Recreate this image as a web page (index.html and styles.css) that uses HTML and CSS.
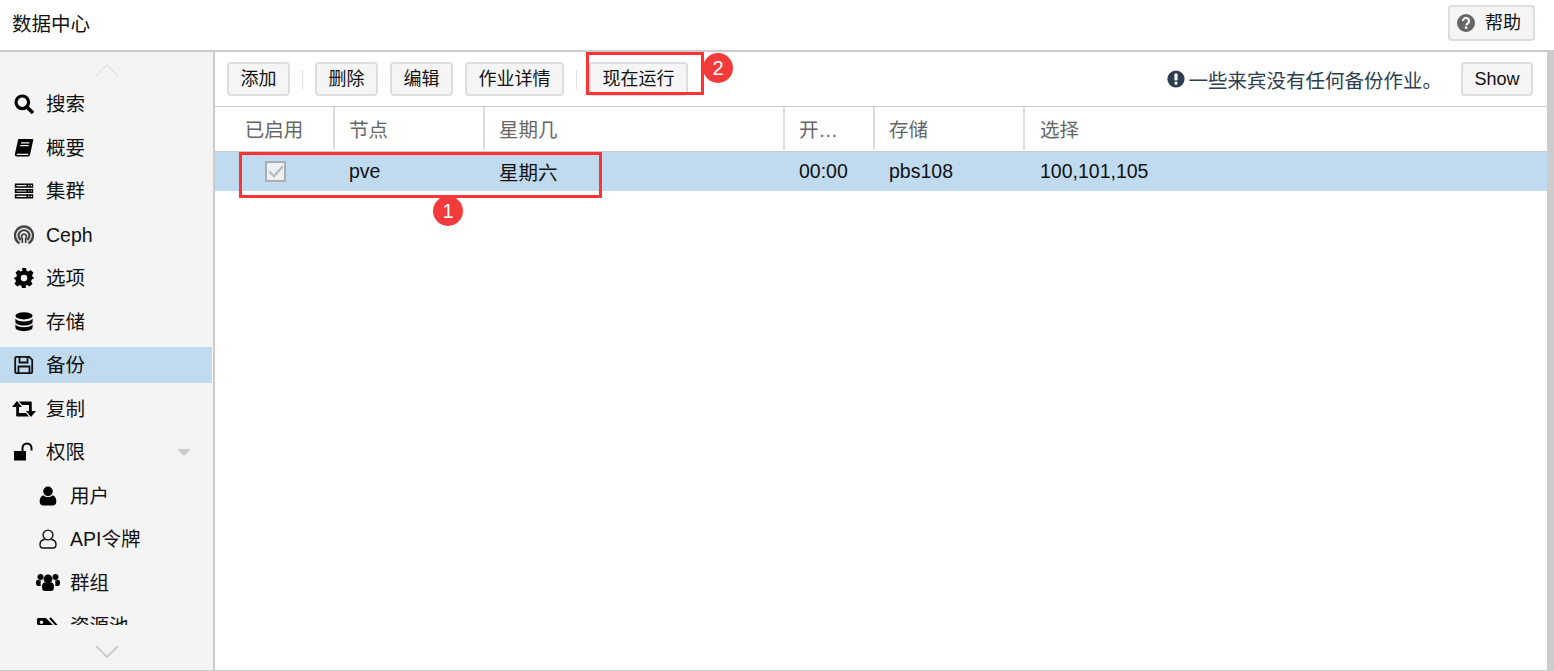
FILE: index.html
```html
<!DOCTYPE html>
<html lang="zh">
<head>
<meta charset="utf-8">
<title>数据中心</title>
<link rel="stylesheet" href="styles.css">
</head>
<body>
<div class="app">
  <header class="topbar">
    <span class="title">数据中心</span>
    <button class="btn help"><svg class="help-ico" viewBox="0 0 18 18"><circle cx="9" cy="9" r="9" fill="#666"/><path d="M6 7a3 3 0 1 1 4.600 2.500c-.9.600-1.100.9-1.100 1.700" fill="none" stroke="#fff" stroke-width="2.200"/><rect x="7.900" y="12.400" width="2.400" height="2.400" fill="#fff"/></svg>帮助</button>
  </header>
  <div class="main">
    <nav class="side">
      <div class="scroller"><svg class="chev" viewBox="0 0 24 13"><path d="M1 12 12 1l11 11" fill="none" stroke="#e6e6e6" stroke-width="2"/></svg></div>
      <ul class="menu">
        <li class="item"><span class="ico"><svg viewBox="0 0 20 20"><circle cx="8.300" cy="8.300" r="6.300" fill="none" stroke="#000" stroke-width="3.200"/><path d="m13 13 6 6" stroke="#000" stroke-width="3.600"/></svg></span>搜索</li>
        <li class="item"><span class="ico"><svg viewBox="0 0 20 20"><path d="M5 1h13.500c.6 0 .9.500.7 1.200L16 16.800c-.2.900-1 1.700-1.900 1.700H3c-1.700 0-2.500-1.200-2-3L4 2c.2-.6.500-1 1-1z"/><path d="M2.800 15.700c-.3 1 .2 1.200.8 1.200h10.600l.3-1.200zM7.200 4.200h8.300l-.3 1.300H6.900zM6.500 7h8.300l-.3 1.300H6.200z" fill="#f4f4f4"/></svg></span>概要</li>
        <li class="item"><span class="ico"><svg viewBox="-1 0 24 18"><path d="M0 0h22v5H0zM0 6.500h22v5H0zM0 13h22v5H0z"/><path d="M2 1.800h12v1.400H2zM2 8.300h12v1.400H2zM2 14.800h12v1.400H2zM16 1.800h1.500v1.400H16zM19 1.800h1.500v1.400H19zM16 8.300h1.500v1.400H16zM19 8.300h1.500v1.400H19zM16 14.800h1.500v1.400H16zM19 14.800h1.500v1.400H19z" fill="#f4f4f4"/></svg></span>集群</li>
        <li class="item"><span class="ico"><svg viewBox="0 0 20 20" fill="none" stroke="#444"><path d="M5.500 18.300a9 9 0 1 1 9 0" stroke-width="2.400"/><path d="M6.800 15a5.400 5.400 0 1 1 6.400 0" stroke-width="2.200"/><path d="M8.300 18v-4.500a2.500 2.500 0 1 1 3.400 0V18" stroke-width="1.800"/></svg></span>Ceph</li>
        <li class="item"><span class="ico"><svg viewBox="0 0 20 20"><path fill-rule="evenodd" d="M8 0h4l.6 2.800 1.700.7 2.400-1.500 2.800 2.800-1.500 2.400.7 1.700L20.500 10v0l-2.800 1.600-.7 1.700 1.500 2.400-2.800 2.800-2.400-1.500-1.700.7L12 20H8l-.6-2.300-1.700-.7-2.400 1.500-2.800-2.800 1.500-2.400-.7-1.700L-.5 10v0l2.800-1.100.7-1.700-1.500-2.400 2.800-2.800 2.400 1.500 1.700-.7zM10 6.800a3.300 3.300 0 1 0 0 6.600 3.300 3.300 0 0 0 0-6.600z"/></svg></span>选项</li>
        <li class="item"><span class="ico"><svg viewBox="0 0 20 21"><ellipse cx="10" cy="4" rx="9" ry="3.800"/><path d="M1 6.500c1 2 4.500 3 9 3s8-1 9-3V10c0 2.200-4 3.800-9 3.800S1 12.200 1 10zM1 12.500c1 2 4.500 3 9 3s8-1 9-3V16c0 2.200-4 3.800-9 3.800S1 18.200 1 16z" transform="translate(0 .4)"/></svg></span>存储</li>
        <li class="item active"><span class="ico"><svg viewBox="0 0 20 20" fill="none" stroke="#111" stroke-width="1.800"><path d="M2.400 1.900h12.800l3 3v12a1.200 1.200 0 0 1-1.200 1.200H2.400a1.200 1.200 0 0 1-1.200-1.200V3.100a1.200 1.200 0 0 1 1.200-1.200z"/><path d="M5.500 2v5.500h8V2M4.500 18v-6.500h11V18"/></svg></span>备份</li>
        <li class="item"><span class="ico wide"><svg viewBox="0 0 24 18"><path d="M5 1 10 7H7v6h7l3 3.500H5.500c-.8 0-1.300-.5-1.300-1.300V7H0zM19 17l-5-6h3V5h-7L7 1.500h11.500c.8 0 1.300.5 1.300 1.300V11H24z"/></svg></span>复制</li>
        <li class="item"><span class="ico"><svg viewBox="0 0 20 18"><path d="M0 8h12v9.500H0z"/><path d="M8.500 8V5a4.500 4.500 0 0 1 9 0v2.500" fill="none" stroke="#000" stroke-width="2"/></svg></span>权限<i class="caret"></i></li>
        <li class="item sub"><span class="ico"><svg viewBox="0 0 16 18"><circle cx="8" cy="4.800" r="4.300"/><path d="M.5 14c0-4 2-5.500 3.500-5.500 1.200 1 2.500 1.400 4 1.400s2.800-.4 4-1.400c1.500 0 3.500 1.500 3.500 5.500 0 2.500-1.500 3.500-3 3.500H3.500C2 17.500.5 16.500.5 14z"/></svg></span>用户</li>
        <li class="item sub"><span class="ico"><svg viewBox="0 0 18 20" fill="none" stroke="#111" stroke-width="1.400"><circle cx="9" cy="6" r="4.900"/><path d="M5.600 10.500C3 10.700 1 12.700 1 15.500c0 2 1 3.500 3 3.500h10c2 0 3-1.500 3-3.500 0-2.800-2-4.800-4.600-5"/></svg></span>API令牌</li>
        <li class="item sub"><span class="ico wide"><svg viewBox="0 0 24 20"><circle cx="12" cy="6" r="4.400"/><circle cx="4.500" cy="4" r="3"/><circle cx="19.500" cy="4" r="3"/><path d="M6 14c0-3 1-4.500 3-4.800 1 .7 2 1 3 1s2-.3 3-1c2 .3 3 1.800 3 4.800 0 3-1.500 4-3 4H9c-1.500 0-3-1-3-4zM0 10c0-2 .6-3.200 2-3.200 1 .6 2 .8 3 .6C4.500 9 4.500 11 4.800 13H2c-1 0-2-1-2-3zM24 10c0-2-.6-3.200-2-3.200-1 .6-2 .8-3 .6.500 1.600.5 3.600.2 5.600H22c1 0 2-1 2-3z"/></svg></span>群组</li>
        <li class="item sub"><span class="ico wide"><svg viewBox="0 0 24 20"><path fill-rule="evenodd" d="M2 2h8l10 10-7 7L1 8V3zM5.500 4.500a1.800 1.800 0 1 0 0 3.600 1.800 1.800 0 0 0 0-3.600z"/><path d="m14 2 9 10-6 6.500" fill="none" stroke="#000" stroke-width="2"/></svg></span>资源池</li>
      </ul>
      <div class="scroller bottom"><svg class="chev" viewBox="0 0 24 13"><path d="M1 1l11 11L23 1" fill="none" stroke="#ccc" stroke-width="2"/></svg></div>
    </nav>
    <section class="content">
      <div class="toolbar">
        <button class="btn">添加</button>
        <span class="sep"></span>
        <button class="btn">删除</button>
        <button class="btn">编辑</button>
        <button class="btn">作业详情</button>
        <span class="sep"></span>
        <button class="btn">现在运行</button>
        <span class="notice"><svg class="warn" viewBox="0 0 18 18"><circle cx="9" cy="9" r="8.600" fill="#2c3e50"/><rect x="7.400" y="3.400" width="3.200" height="7.200" rx="1" fill="#fff"/><rect x="7.600" y="11.800" width="2.800" height="2.800" fill="#fff"/></svg>一些来宾没有任何备份作业。</span>
        <button class="btn show">Show</button>
      </div>
      <div class="grid">
        <div class="row head">
          <div class="cell c1 center">已启用</div>
          <div class="cell c2">节点</div>
          <div class="cell c3">星期几</div>
          <div class="cell c4">开…</div>
          <div class="cell c5">存储</div>
          <div class="cell c6">选择</div>
        </div>
        <div class="row data">
          <div class="cell c1 center"><svg class="check" viewBox="0 0 20 20"><rect x="1" y="1" width="18" height="18" fill="#eef1f3" stroke="#aaa" stroke-width="1.800"/><path d="m4 10 4.500 4.500L17 5" fill="none" stroke="#bbb" stroke-width="2.200"/></svg></div>
          <div class="cell c2">pve</div>
          <div class="cell c3">星期六</div>
          <div class="cell c4">00:00</div>
          <div class="cell c5">pbs108</div>
          <div class="cell c6">100,101,105</div>
        </div>
      </div>
    </section>
  </div>
  <div class="mark box1"></div>
  <div class="mark box2"></div>
  <div class="badge b1">1</div>
  <div class="badge b2">2</div>
</div>
</body>
</html>
```
FILE: styles.css
```css
* { box-sizing: border-box; }
html, body { margin: 0; height: 100%; overflow: hidden; }
body {
  background: #fff;
  color: #111;
  font-family: "Liberation Sans", "Noto Sans CJK SC", sans-serif;
  font-size: 19.5px;
}
.app {
  position: relative;
  width: 1554px;
  height: 671px;
  display: flex;
  flex-direction: column;
  border-bottom: 1px solid #ccc;
}
.topbar {
  height: 52px;
  flex: none;
  display: flex;
  align-items: flex-start;
  justify-content: space-between;
  padding: 5px 19px 0 12px;
  border-bottom: 2px solid #ccc;
}
.title { line-height: 38px; }
.btn {
  height: 34px;
  padding: 0 11.5px;
  background: #f5f5f5;
  border: 2px solid #ddd;
  border-radius: 4px;
  color: #111;
  font: inherit;
  font-size: 18px;
  line-height: 28px;
  white-space: nowrap;
}
.help {
  height: 36px;
  width: 87px;
  display: flex;
  align-items: center;
  padding: 0 0 0 7px;
}
.help-ico { width: 18px; height: 18px; margin-right: 10px; }
.main { flex: 1; min-height: 0; display: flex; }
.side {
  width: 215px;
  flex: none;
  display: flex;
  flex-direction: column;
  background: #f4f4f4;
  border-right: 2px solid #ccc;
}
.scroller {
  height: 30px;
  flex: none;
  display: flex;
  justify-content: center;
  align-items: center;
  padding-top: 6px;
}
.scroller.bottom { height: 45px; padding-top: 8px; }
.chev { width: 24px; height: 13px; }
.menu {
  list-style: none;
  margin: 0;
  padding: 4px 0 0;
  flex: 1;
  min-height: 0;
  overflow: hidden;
  display: flex;
  flex-direction: column;
  gap: 7.5px;
}
.item {
  position: relative;
  height: 36px;
  flex: none;
  display: flex;
  align-items: center;
  padding-left: 14px;
  line-height: 36px;
}
.item.active { background: #c0daf0; margin-right: 1px; }
.item.sub { padding-left: 38px; }
.ico {
  width: 20px;
  height: 20px;
  margin-right: 12px;
  display: flex;
  align-items: center;
  justify-content: center;
  flex: none;
}
.ico svg { width: 20px; height: 20px; flex: none; }
.ico.wide { width: 24px; margin-left: -2px; margin-right: 10px; }
.ico.wide svg { width: 24px; }
.caret {
  position: absolute;
  right: 22px;
  top: 15px;
  border-left: 7.5px solid transparent;
  border-right: 7.5px solid transparent;
  border-top: 7.5px solid #ccc;
}
.content { flex: 1; min-width: 0; display: flex; flex-direction: column; border-right: 7px solid #ccc; }
.toolbar {
  height: 54px;
  flex: none;
  display: flex;
  align-items: center;
  padding: 0 14px 0 12px;
  gap: 12px;
}
.sep { width: 1px; height: 19px; background: #ddd; }
.notice {
  margin-left: auto;
  margin-right: 7px;
  display: flex;
  align-items: center;
  color: #2c3e50;
}
.warn { width: 18px; height: 18px; margin-right: 3px; }
.show { width: 72px; padding: 0; }
.grid { flex: 1; border-top: 1px solid #ccc; }
.row { display: flex; }
.head {
  height: 45px;
  color: #666;
  border-bottom: 1px solid #ccc;
}
.head .cell { border-right: 2px solid #ddd; height: 43px; }
.head .c6 { border-right: 0; }
.data { height: 39px; background: #c0daf0; }
.cell {
  padding: 0 0 0 14px;
  display: flex;
  align-items: center;
  white-space: nowrap;
  overflow: hidden;
}
.center { justify-content: center; padding: 0; }
.data .c6, .head .c6 { padding-left: 15px; }
.c1 { width: 120px; }
.c2 { width: 150px; }
.c3 { width: 300px; }
.c4 { width: 90px; }
.c5 { width: 150px; }
.c6 { flex: 1; }
.check { width: 21px; height: 21px; }
.mark { position: absolute; border: 3px solid #f33; }
.box1 { left: 239px; top: 152px; width: 363px; height: 46px; }
.box2 { left: 586px; top: 52px; width: 118px; height: 43px; }
.badge {
  position: absolute;
  width: 30px;
  height: 30px;
  border-radius: 50%;
  background: #f33b3b;
  color: #fff;
  text-align: center;
  line-height: 30px;
  font-size: 20px;
}
.b1 { left: 433px; top: 196px; }
.b2 { left: 703px; top: 53px; }
```
